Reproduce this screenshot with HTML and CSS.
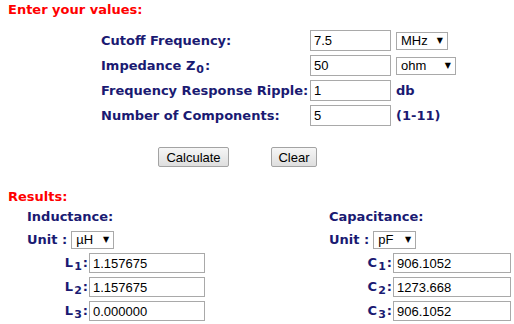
FILE: index.html
```html
<!DOCTYPE html>
<html>
  <head>
    <title>Chebyshev Low Pass Filter</title>
    <link rel="stylesheet" href="styles.css">
  </head>
  <body>
    <div class="heading">Enter your values:</div>
    <div class="inputs">
      <div class="label">Cutoff Frequency:</div>
      <input class="field" type="text" value="7.5">
      <div class="select select-mhz"><select><option>MHz</option></select></div>

      <div class="label">Impedance Z<sub>0</sub>:</div>
      <input class="field" type="text" value="50">
      <div class="select select-ohm"><select><option>ohm</option></select></div>

      <div class="label">Frequency Response Ripple:</div>
      <input class="field" type="text" value="1">
      <div class="label">db</div>

      <div class="label">Number of Components:</div>
      <input class="field" type="text" value="5">
      <div class="label">(1-11)</div>
    </div>

    <div class="buttons">
      <button class="btn btn-calc" type="button">Calculate</button>
      <button class="btn btn-clear" type="button">Clear</button>
    </div>

    <div class="heading results-heading">Results:</div>
    <div class="results">
      <div class="column">
        <div class="label">Inductance:</div>
        <div class="unit-row">
          <span class="label">Unit :</span>
          <div class="select select-uh"><select><option>&micro;H</option></select></div>
        </div>
        <div class="value-row">
          <span class="label name name-l">L<sub>1</sub>:</span>
          <input class="field value-l" type="text" value="1.157675">
        </div>
        <div class="value-row">
          <span class="label name name-l">L<sub>2</sub>:</span>
          <input class="field value-l" type="text" value="1.157675">
        </div>
        <div class="value-row">
          <span class="label name name-l">L<sub>3</sub>:</span>
          <input class="field value-l" type="text" value="0.000000">
        </div>
      </div>
      <div class="column">
        <div class="label">Capacitance:</div>
        <div class="unit-row">
          <span class="label">Unit :</span>
          <div class="select select-pf"><select><option>pF</option></select></div>
        </div>
        <div class="value-row">
          <span class="label name name-c">C<sub>1</sub>:</span>
          <input class="field value-c" type="text" value="906.1052">
        </div>
        <div class="value-row">
          <span class="label name name-c">C<sub>2</sub>:</span>
          <input class="field value-c" type="text" value="1273.668">
        </div>
        <div class="value-row">
          <span class="label name name-c">C<sub>3</sub>:</span>
          <input class="field value-c" type="text" value="906.1052">
        </div>
      </div>
    </div>
  </body>
</html>
```

FILE: styles.css
```css
body {
  margin: 0;
  padding: 0 8px;
  background: #fff;
  font-family: "DejaVu Sans", Verdana, sans-serif;
}

.heading {
  margin-top: 2px;
  font-size: 13px;
  line-height: 16px;
  font-weight: bold;
  color: #f00;
}

.label {
  font-size: 13px;
  font-weight: bold;
  color: #1a1a72;
  white-space: nowrap;
}

.label sub {
  font-size: 11px;
  line-height: 0;
  vertical-align: -3px;
  margin: 0 1px;
}

.inputs {
  display: grid;
  grid-template-columns: 209px 86px auto;
  grid-auto-rows: 25px;
  align-items: center;
  justify-items: start;
  margin: 10px 0 0 93px;
}

.field {
  box-sizing: border-box;
  height: 21px;
  width: 81px;
  margin: 0;
  padding: 0 3px;
  border: 1px solid #a9a9a9;
  font-family: "Liberation Sans", Arial, sans-serif;
  font-size: 13px;
  color: #000;
  background: #fff;
  outline: none;
}

.select {
  position: relative;
  display: inline-block;
  height: 18px;
}

.select select {
  box-sizing: border-box;
  display: block;
  height: 18px;
  margin: 0;
  padding: 0 0 0 4px;
  border: 1px solid #a9a9a9;
  border-radius: 0;
  -webkit-appearance: none;
  appearance: none;
  background: #fff;
  font-family: "Liberation Sans", Arial, sans-serif;
  font-size: 13px;
  line-height: 16px;
  color: #000;
}

.select::after {
  content: "\25BC";
  position: absolute;
  right: 5px;
  top: 4px;
  font-family: "DejaVu Sans", sans-serif;
  font-size: 8px;
  line-height: 10px;
  color: #000;
  pointer-events: none;
}

.select-mhz select { width: 52px; }
.select-ohm select { width: 60px; }
.select-uh select { width: 43px; }
.select-pf select { width: 43px; }

.buttons {
  display: flex;
  gap: 42px;
  margin: 19px 0 0 150px;
}

.btn {
  box-sizing: border-box;
  height: 20px;
  padding: 0;
  border: 1px solid #a3a3a3;
  border-radius: 2px;
  background: linear-gradient(#f6f6f6, #dedede);
  font-family: "Liberation Sans", Arial, sans-serif;
  font-size: 13px;
  color: #000;
}

.btn-calc { width: 71px; }
.btn-clear { width: 46px; }

.results-heading {
  margin-top: 22px;
}

.results {
  display: grid;
  grid-template-columns: 302px auto;
  margin: 4px 0 0 19px;
}

.column .label {
  line-height: 16px;
}

.unit-row {
  display: flex;
  align-items: center;
  gap: 4px;
  height: 21px;
  margin-top: 4px;
}

.value-row {
  display: flex;
  align-items: center;
  height: 20px;
  margin-top: 4px;
}

.unit-row + .value-row {
  margin-top: 3px;
}

.name {
  box-sizing: border-box;
  text-align: right;
  padding-right: 1px;
}

.name-l {
  width: 62px;
}

.name-c {
  width: 64px;
}

.value-row .field {
  height: 20px;
}

.value-l { width: 116px; }
.value-c { width: 118px; }
```
